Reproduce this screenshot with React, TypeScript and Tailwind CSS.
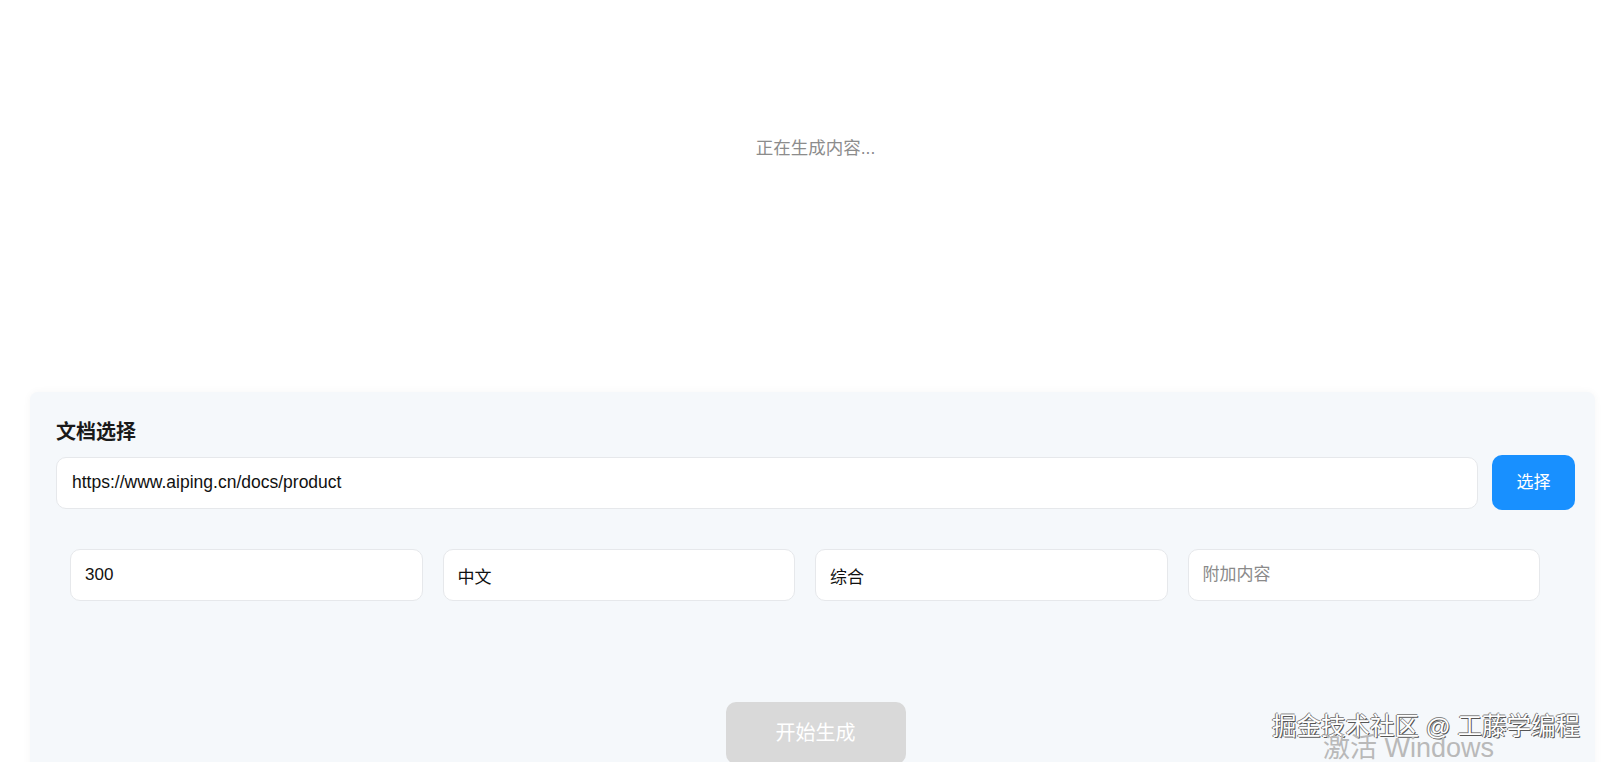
import React from 'react';

const font = { fontFamily: '"Liberation Sans", "Noto Sans CJK SC", sans-serif' };

const fieldClass =
  'h-[52px] w-full rounded-[10px] border border-[#e6e8eb] bg-white px-[14px] text-[#111] outline-none placeholder:text-[#8a8a8a]';

export default function App() {
  const [url, setUrl] = React.useState('https://www.aiping.cn/docs/product');
  const [count, setCount] = React.useState('300');
  const [lang, setLang] = React.useState('中文');
  const [style, setStyle] = React.useState('综合');
  const [extra, setExtra] = React.useState('');

  return (
    <div className="relative h-[762px] w-full overflow-hidden bg-white" style={font}>
      {/* output area */}
      <div className="h-[392px] pl-[56px] pr-[28px] pt-[136px] text-center">
        <p className="text-[17.5px] leading-[24px] text-[#8c8c8c]">正在生成内容...</p>
      </div>

      {/* settings panel */}
      <div className="ml-[30px] h-[400px] w-[1565px] rounded-lg bg-[#f5f8fb] pl-[26px] pr-[20px] pt-[26px] shadow-[0_0_8px_rgba(0,0,0,0.04)]">
        <h3 className="text-[20px] font-semibold leading-[28px] text-[#1a1a1a]">文档选择</h3>

        <div className="mt-[9px] flex items-center gap-[14px]">
          <input
            className="h-[52px] flex-1 rounded-[10px] border border-[#e6e8eb] bg-white px-[15px] text-[17.5px] text-[#111] outline-none"
            value={url}
            onChange={(e) => setUrl(e.target.value)}
          />
          <button className="h-[55px] w-[83px] shrink-0 rounded-[10px] bg-[#1890ff] text-[17px] text-white">
            选择
          </button>
        </div>

        <div className="ml-[14px] mr-[35px] mt-[39px] grid grid-cols-4 gap-x-5 text-[17px]">
          <input className={fieldClass} value={count} onChange={(e) => setCount(e.target.value)} />
          <input className={fieldClass} value={lang} onChange={(e) => setLang(e.target.value)} />
          <input className={fieldClass} value={style} onChange={(e) => setStyle(e.target.value)} />
          <input
            className={fieldClass}
            placeholder="附加内容"
            value={extra}
            onChange={(e) => setExtra(e.target.value)}
          />
        </div>

        <div className="mt-[101px] flex justify-center">
          <button
            disabled
            className="h-[62px] w-[180px] rounded-[10px] bg-[#d9d9d9] text-[20px] text-white"
          >
            开始生成
          </button>
        </div>
      </div>

      {/* watermarks */}
      <div className="pointer-events-none absolute left-[1272px] top-[717px] whitespace-nowrap text-[24.5px] leading-[20px] text-white [text-shadow:1px_1px_0_#555,-1px_0_0_#777,0_-1px_0_#888]">
        掘金技术社区 @ 工藤学编程
      </div>
      <div className="pointer-events-none absolute left-[1323px] top-[738px] whitespace-nowrap text-[27px] leading-[20px] text-[#b9b9b9]">
        激活 Windows
      </div>
    </div>
  );
}
